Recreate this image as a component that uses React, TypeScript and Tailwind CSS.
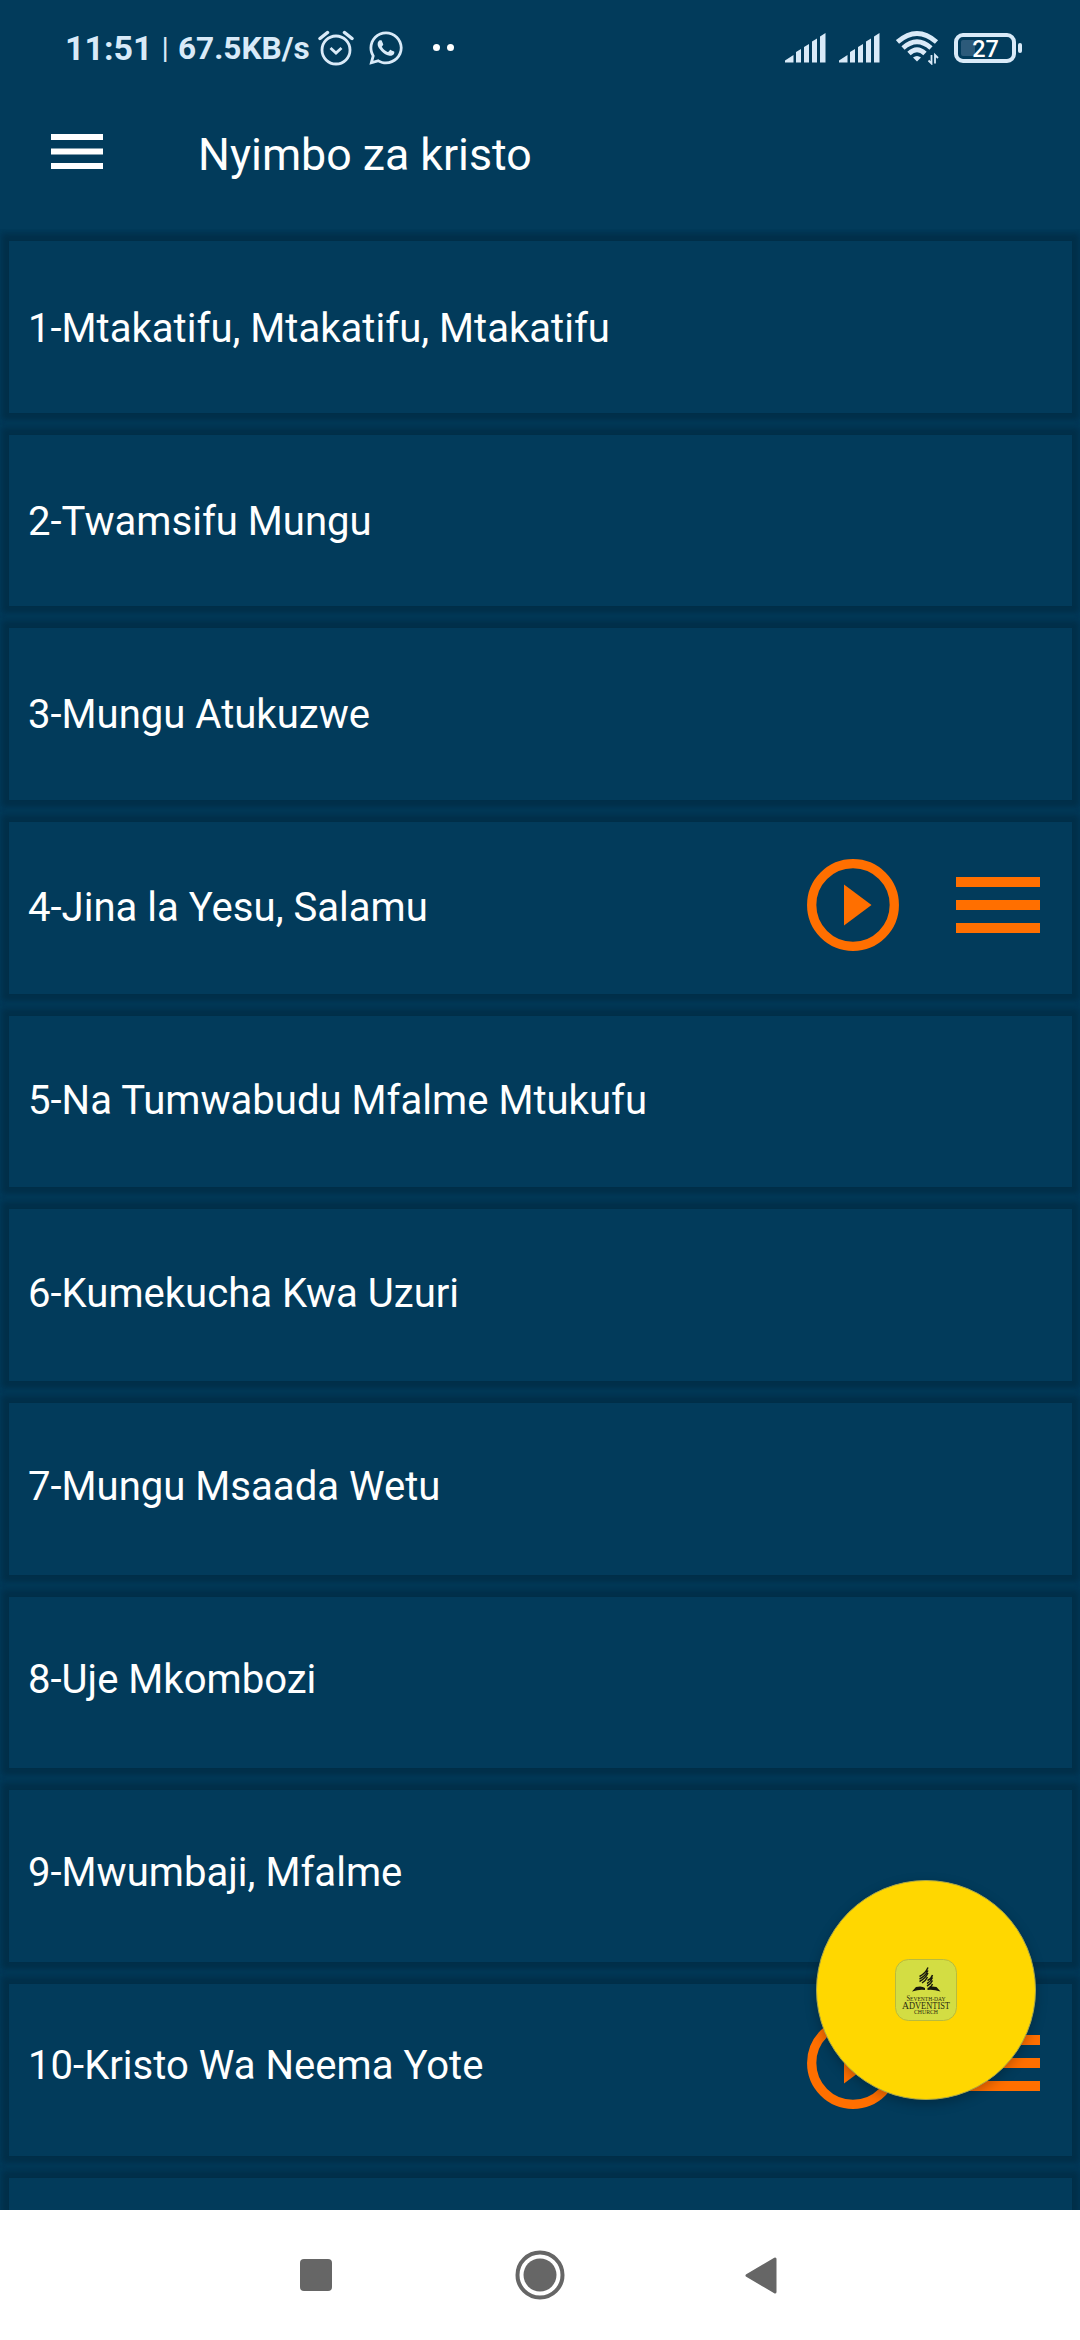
import { FaWhatsapp } from "react-icons/fa";

interface Song {
  title: string;
  audio?: boolean;
}

const songs: Song[] = [
  { title: "1-Mtakatifu, Mtakatifu, Mtakatifu" },
  { title: "2-Twamsifu Mungu" },
  { title: "3-Mungu Atukuzwe" },
  { title: "4-Jina la Yesu, Salamu", audio: true },
  { title: "5-Na Tumwabudu Mfalme Mtukufu" },
  { title: "6-Kumekucha Kwa Uzuri" },
  { title: "7-Mungu Msaada Wetu" },
  { title: "8-Uje Mkombozi" },
  { title: "9-Mwumbaji, Mfalme" },
  { title: "10-Kristo Wa Neema Yote", audio: true },
  { title: "" },
];

function Signal() {
  return (
    <svg width="41" height="30" viewBox="0 0 41 30" fill="currentColor">
      <path d="M0 29.5v-2L8.500 22v7.500zM11 19l5-3v13.500h-5zM19 14l5-3v18.500h-5zM27 8.500l5-3v24h-5zM35 3.500L40.500 0v29.500H35z" />
    </svg>
  );
}

function StatusBar() {
  return (
    <div className="flex h-[95px] items-center pl-[65px] pr-[59px] text-[#d9eaf8]">
      <div className="flex items-center whitespace-pre pt-px text-[34px] font-bold leading-none">
        <span>11:51</span>
        <span className="px-[9px] text-[30px] font-normal">|</span>
        <span className="pt-0.5 text-[31.6px]">67.5KB/s</span>
      </div>
      <svg className="ml-2" width="36" height="36" viewBox="0 0 36 36" fill="none" stroke="currentColor" strokeWidth="2.800">
        <circle cx="18" cy="20" r="14" />
        <path d="M12.500 18l5.500 5 5.500-5" strokeWidth="2.800" />
        <path d="M2 8.500L9.500 2.500M34 8.500L26.500 2.500" strokeWidth="3.500" strokeLinecap="round" />
      </svg>
      <FaWhatsapp className="ml-[13px] size-[38px]" />
      <div className="ml-[28px] flex gap-[7px] text-white">
        <span className="size-[7px] rounded-full bg-white" />
        <span className="size-[7px] rounded-full bg-white" />
      </div>
      <div className="ml-auto -mr-0.5 flex items-center">
        <Signal />
        <span className="w-[13px]" />
        <Signal />
        <svg className="ml-4" width="43" height="34" viewBox="0 0 43 34" fill="none" stroke="currentColor" strokeWidth="4.800">
          <path d="M1.500 11Q21 -6 40.500 11M7 17Q21 4.500 35 17M13 22.500Q21 15 29 22.500" />
          <path d="M17 26.500q4-3 8 0l-4 4z" fill="currentColor" stroke="none" />
          <path d="M35.500 24v8.500l-3-3M39 32.500V24l3 3" strokeWidth="1.800" />
        </svg>
        <svg className="ml-[15px]" width="69" height="30" viewBox="0 0 69 30">
          <rect x="2" y="2" width="58" height="26" rx="7" fill="none" stroke="currentColor" strokeWidth="4" />
          <rect x="7" y="7" width="14" height="16" rx="2" fill="#2c5a7a" />
          <rect x="64" y="10" width="4" height="10" rx="2" fill="currentColor" />
          <text x="31.500" y="23.800" textAnchor="middle" fontSize="23.500" fontWeight="500" fill="white">
            27
          </text>
        </svg>
      </div>
    </div>
  );
}

function SongRow({ song, index }: { song: Song; index: number }) {
  // the shadow drifts down a little further on each row
  const drift = index * 0.65;

  return (
    <li className="grid h-[193px] shrink-0">
      <div
        className="col-start-1 row-start-1 mx-[8.500px] bg-[#023b5b] shadow-[0_0_5px_6px_#002f49,0_-1px_5px_8px_rgba(0,40,64,0.3)]"
        style={{ marginTop: 12 + drift, marginBottom: 9.3 - drift }}
      />
      <div className="col-start-1 row-start-1 flex items-center pl-7 pr-10">
        <p className="pt-2 text-[40.1px] text-white">{song.title}</p>
        {song.audio && (
          <div className="ml-auto flex items-center gap-[57px] text-[#ff6f00]">
            <svg width="92" height="92" viewBox="0 0 92 92">
              <circle cx="46" cy="46" r="41.300" fill="none" stroke="currentColor" strokeWidth="9.300" />
              <path d="M37 25.500v41L64.500 46z" fill="currentColor" />
            </svg>
            <svg width="84" height="56" viewBox="0 0 84 56" fill="currentColor">
              <path d="M0 0h84v10H0zM0 23h84v10H0zM0 46h84v10H0z" />
            </svg>
          </div>
        )}
      </div>
    </li>
  );
}

function ChurchLogo() {
  return (
    <svg width="62" height="62" viewBox="0 0 62 62">
      <rect x="0.500" y="0.500" width="61" height="61" rx="13" fill="#d3dd43" stroke="#b9bb3c" />
      <path d="M17 32.500l4-4.500q6-1.500 9 1v2q-5-1-13 1.500zM45.500 32.500l-4-4.500q-6-1.500-9 1v2q5-1 13 1.500z" fill="#17170c" />
      <g fill="none" stroke="#17170c" strokeWidth="1.400">
        <path d="M24.500 17.500q6-3 8.500-9M24.500 20q6-3 8.500-8.500M24.500 22.500q6-3 8.500-8.500M27 24q4-2.500 5.500-6" />
        <path d="M32.500 21.500q4-2 5-5.500M32 24.500q4-2 5.500-6M32 27q4-2 5.500-5.500M34.500 28.500q2-1 3-3.500" />
      </g>
      <g fill="#2b2c12" textAnchor="middle" className="font-['Liberation_Serif',serif]">
        <text x="31" y="42" fontSize="8" textLength="39" lengthAdjust="spacingAndGlyphs">
          S<tspan fontSize="6.800">EVENTH-DAY</tspan>
        </text>
        <text x="31" y="49.500" fontSize="11" textLength="48" lengthAdjust="spacingAndGlyphs">
          A<tspan fontSize="9.500">DVENTIST</tspan>
        </text>
        <text x="31" y="55" fontSize="6.500" textLength="24" lengthAdjust="spacingAndGlyphs">
          CHURCH
        </text>
      </g>
    </svg>
  );
}

export default function App() {
  return (
    <div className="relative flex h-[2340px] w-[1080px] flex-col overflow-hidden bg-[#023b5b] font-[Roboto,sans-serif]">
      <StatusBar />
      <header className="flex h-[134px] shrink-0 items-start pl-[51px]">
        <svg className="mt-[39px]" width="52" height="36" viewBox="0 0 52 36" fill="white">
          <path d="M0 0h52v6H0zM0 14.500h52v6H0zM0 29h52v6H0z" />
        </svg>
        <h1 className="ml-[95px] mt-[34px] text-[44.7px] leading-[52px] text-white">Nyimbo za kristo</h1>
      </header>
      <ul className="flex min-h-0 flex-1 flex-col overflow-hidden">
        {songs.map((song, idx) => (
          <SongRow key={idx} song={song} index={idx} />
        ))}
      </ul>
      <nav className="relative flex h-[130px] shrink-0 items-center bg-white pl-[300px]">
        <span className="size-8 rounded-sm bg-[#666]" />
        <svg className="ml-[183px]" width="50" height="50" viewBox="0 0 50 50">
          <circle cx="25" cy="25" r="22.500" fill="none" stroke="#666" strokeWidth="4" />
          <circle cx="25" cy="25" r="16.500" fill="#666" />
        </svg>
        <svg className="ml-[180px]" width="32" height="37" viewBox="0 0 32 37">
          <path d="M2 18.500L30 2v33z" fill="#666" stroke="#666" strokeWidth="3" strokeLinejoin="round" />
        </svg>
      </nav>
      <button className="absolute left-[816px] top-[1880px] flex size-[220px] items-center justify-center rounded-full border border-[#a9a64a] bg-[#ffd700] shadow-[0_4px_12px_rgba(0,0,0,0.25)]">
        <ChurchLogo />
      </button>
    </div>
  );
}
